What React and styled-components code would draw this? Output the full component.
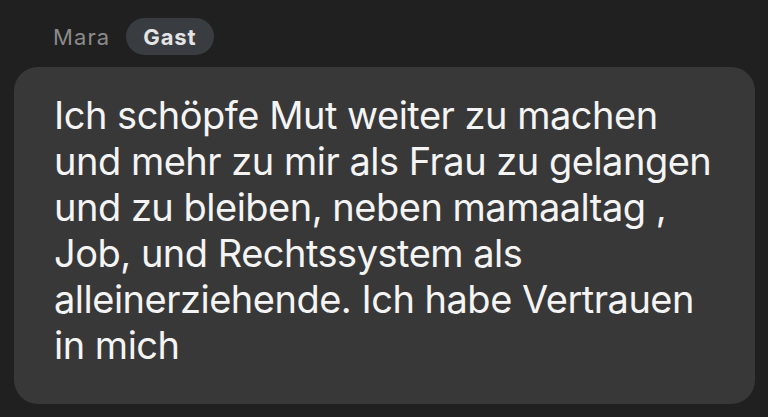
import React from 'react'
import styled, { createGlobalStyle } from 'styled-components'

const GlobalStyle = createGlobalStyle`
  html, body {
    margin: 0;
    padding: 0;
    background: #202020;
  }
  body {
    font-family: Inter, "Liberation Sans", sans-serif;
    -webkit-font-smoothing: antialiased;
  }
`

const Page = styled.div`
  width: 768px;
  height: 417px;
  box-sizing: border-box;
  padding: 18px 14px 0 14px;
  background: #202020;
  overflow: hidden;
`

const Header = styled.div`
  display: flex;
  align-items: center;
  gap: 16px;
  padding-left: 39px;
  height: 37px;
  margin-bottom: 12px;
`

const Author = styled.span`
  font-size: 22px;
  color: #8b8b8b;
  letter-spacing: 1.1px;
`

const Badge = styled.span`
  display: inline-flex;
  align-items: center;
  height: 37px;
  padding: 0 17px;
  border-radius: 19px;
  background: #393c41;
  color: #e4e4e4;
  font-size: 22px;
  font-weight: 700;
  letter-spacing: 0.9px;
`

const Bubble = styled.div`
  width: 741px;
  box-sizing: border-box;
  padding: 25px 40px 36px 40px;
  border-radius: 24px;
  background: #383838;
  color: #f4f4f4;
  font-size: 38px;
  line-height: 46px;
  letter-spacing: -0.5px;
`

export default function App() {
  return (
    <>
      <GlobalStyle />
      <Page>
        <Header>
          <Author>Mara</Author>
          <Badge>Gast</Badge>
        </Header>
        <Bubble>
          Ich schöpfe Mut weiter zu machen<br />
          und mehr zu mir als Frau zu gelangen<br />
          und zu bleiben, neben mamaaltag ,<br />
          Job, und Rechtssystem als<br />
          alleinerziehende. Ich habe Vertrauen<br />
          in mich
        </Bubble>
      </Page>
    </>
  )
}
